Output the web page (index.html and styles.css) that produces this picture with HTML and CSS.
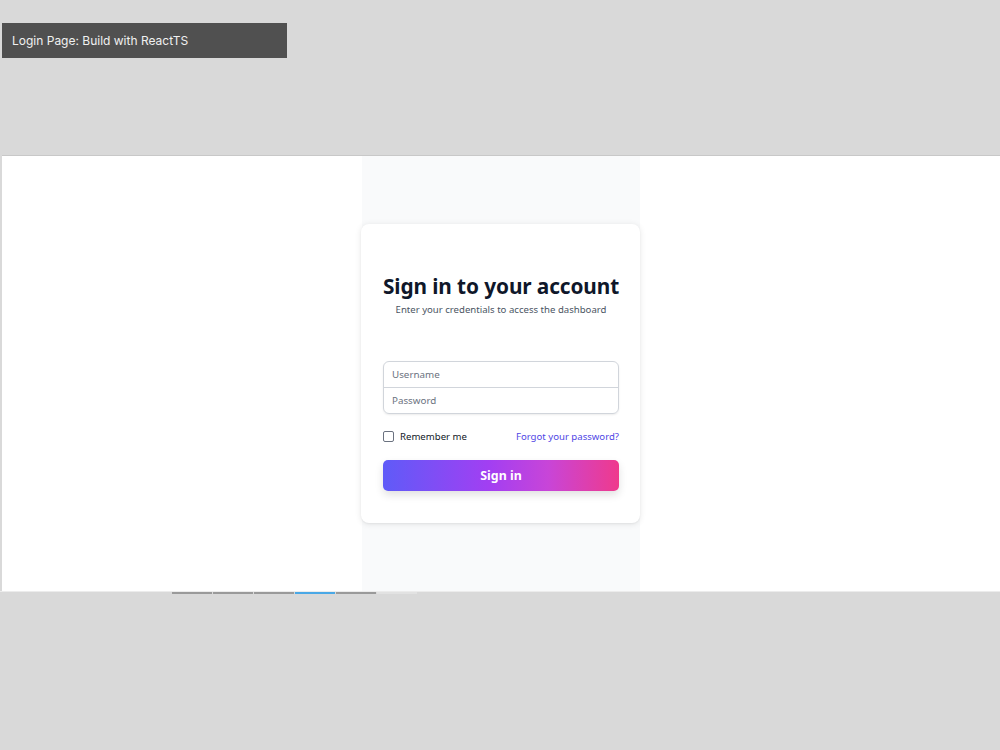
FILE: index.html
```html
<!DOCTYPE html>
<html lang="en">
<head>
<meta charset="utf-8">
<title>Login Page</title>
<link rel="stylesheet" href="styles.css">
</head>
<body>
  <div class="caption">Login Page: Build with ReactTS</div>
  <div class="frame">
    <div class="column">
      <div class="card">
        <h1 class="title">Sign in to your account</h1>
        <p class="subtitle">Enter your credentials to access the dashboard</p>
        <div class="inputs">
          <div class="field">Username</div>
          <div class="field">Password</div>
        </div>
        <div class="options">
          <label class="remember"><span class="check"></span>Remember me</label>
          <span class="forgot">Forgot your password?</span>
        </div>
        <div class="button">Sign in</div>
      </div>
    </div>
  </div>
  <div class="bottom-line"></div>
  <div class="tabs">
    <span class="tab"></span>
    <span class="tab"></span>
    <span class="tab"></span>
    <span class="tab active"></span>
    <span class="tab"></span>
    <span class="tab faint"></span>
  </div>
</body>
</html>
```
FILE: styles.css
```css
html, body {
  margin: 0;
  padding: 0;
  background: #d9d9d9;
  height: 750px;
  overflow: hidden;
}
body {
  font-family: "Noto Sans", "Open Sans", sans-serif;
}
.caption {
  margin: 23px 0 0 2px;
  width: 275px;
  height: 35px;
  padding-left: 10px;
  background: #505050;
  color: #f0f0f0;
  font-family: Inter, "Noto Sans", sans-serif;
  font-size: 12px;
  line-height: 35px;
}
.frame {
  margin: 97px 0 0 2px;
  border-top: 1px solid #c8c8c8;
  background: #ffffff;
  height: 435px;
  display: flex;
  justify-content: center;
}
.column {
  width: 278px;
  background: #f9fafb;
  padding-top: 68px;
  box-sizing: border-box;
  display: flex;
  justify-content: center;
}
.card {
  width: 279px;
  height: 299px;
  flex: none;
  margin-left: -1px;
  box-sizing: border-box;
  background: #ffffff;
  border-radius: 8px;
  box-shadow: 0 1px 6px rgba(0, 0, 0, 0.10), 0 1px 2px rgba(0, 0, 0, 0.04);
  padding: 47px 21px 0 22px;
}
.title {
  margin: 0;
  font-size: 20.8px;
  line-height: 30px;
  font-weight: 700;
  color: #0f172a;
  text-align: center;
  white-space: nowrap;
  letter-spacing: -0.1px;
}
.subtitle {
  margin: 2px 0 0;
  font-size: 9.6px;
  line-height: 14px;
  color: #4b5563;
  text-align: center;
  white-space: nowrap;
}
.inputs {
  margin-top: 44px;
  border: 1px solid #d1d5db;
  border-radius: 6px;
  box-shadow: 0 1px 2px rgba(0, 0, 0, 0.08);
}
.field {
  height: 25px;
  line-height: 25px;
  padding-left: 8px;
  font-size: 9.8px;
  color: #6b7280;
}
.field + .field {
  border-top: 1px solid #d1d5db;
}
.options {
  margin-top: 15px;
  display: flex;
  justify-content: space-between;
  align-items: center;
  height: 14px;
  font-size: 9.6px;
}
.remember {
  display: flex;
  align-items: center;
  color: #111827;
}
.check {
  width: 9px;
  height: 9px;
  border: 1px solid #6b7280;
  border-radius: 2px;
  margin-right: 6px;
  background: #fff;
}
.forgot {
  color: #4f46e5;
}
.button {
  margin-top: 17px;
  height: 31px;
  line-height: 31px;
  border-radius: 5px;
  background: linear-gradient(to right, #5f5bf8, #a23ff2 45%, #c845d8 70%, #ef3a8c);
  color: #ffffff;
  font-weight: 700;
  font-size: 12.4px;
  text-align: center;
  box-shadow: 0 4px 8px rgba(0, 0, 0, 0.12);
}
.bottom-line {
  height: 1px;
  background: #ececec;
}
.tabs {
  display: flex;
  gap: 1px;
  margin-left: 172px;
}
.tab {
  width: 40px;
  height: 2px;
  background: #9a9a9a;
}
.tab.active {
  background: #4aa8e6;
}
.tab.faint {
  background: #e2e2e2;
}
```
